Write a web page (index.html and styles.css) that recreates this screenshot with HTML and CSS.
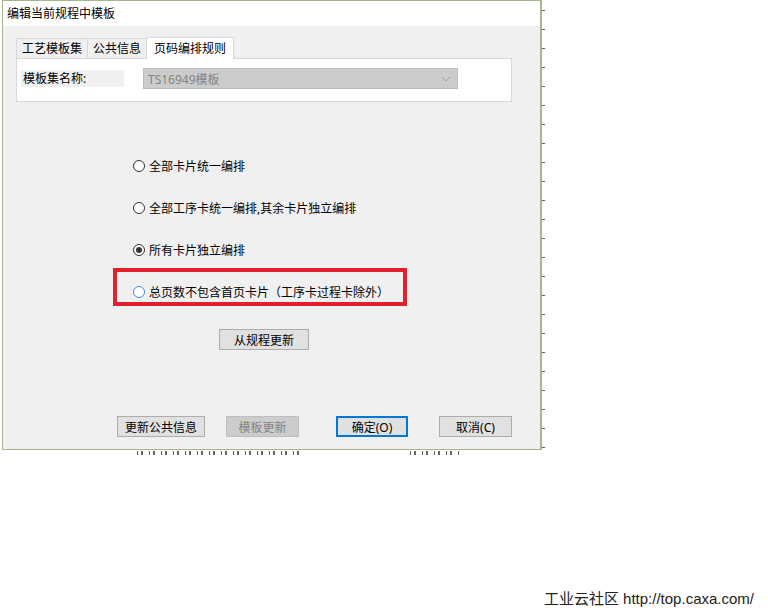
FILE: index.html
```html
<!DOCTYPE html>
<html lang="zh-CN">
<head>
  <meta charset="UTF-8" />
  <meta name="viewport" content="width=device-width, initial-scale=1.0"/>
  <title>编辑当前规程中模板</title>
  <link rel="stylesheet" href="styles.css">
</head>
<body>
  <div class="screen">
    <div class="top">
      <div class="dialog">
        <div class="title-bar">编辑当前规程中模板</div>

        <div class="content">
          <div class="tabs">
            <div class="tab">工艺模板集</div>
            <div class="tab">公共信息</div>
            <div class="tab active">页码编排规则</div>
          </div>

          <div class="panel">
            <div class="field-label">模板集名称:</div>
            <div class="combo">
              <span>TS16949模板</span>
              <svg width="10" height="6" viewBox="0 0 10 6"><path d="M1 1 L5 5 L9 1" fill="none" stroke="#a6a6a6" stroke-width="1"/></svg>
            </div>
          </div>

          <div class="options">
            <label class="opt"><span class="radio"></span>全部卡片统一编排</label>
            <label class="opt"><span class="radio"></span>全部工序卡统一编排,其余卡片独立编排</label>
            <label class="opt"><span class="radio checked"></span>所有卡片独立编排</label>
            <label class="opt marked"><span class="radio focus"></span>总页数不包含首页卡片（工序卡过程卡除外）</label>
          </div>

          <button class="btn btn-refresh">从规程更新</button>

          <div class="actions">
            <button class="btn btn-common">更新公共信息</button>
            <button class="btn btn-template" disabled>模板更新</button>
            <button class="btn btn-ok">确定(O)</button>
            <button class="btn btn-cancel">取消(C)</button>
          </div>
        </div>
      </div>
      <div class="ticks"></div>
    </div>

    <!-- bottoms of the window behind, peeking out under the dialog -->
    <div class="behind">
      <div class="marks marks-a"></div>
      <div class="marks marks-b"></div>
    </div>

    <div class="footer">工业云社区 http://top.caxa.com/</div>
  </div>
</body>
</html>
```

FILE: styles.css
```css
*, *::before, *::after {
  box-sizing: border-box;
}

body {
  margin: 0;
  background: #fff;
  color: #000;
  font-family: "Noto Sans", "Noto Sans CJK SC", sans-serif;
  font-size: 12px;
}

.screen {
  width: 768px;
  height: 614px;
  display: flex;
  flex-direction: column;
}

.top {
  display: flex;
}

/* dialog window */
.dialog {
  width: 540px;
  margin-left: 2px;
  border: 1px solid #a3b78a;
  border-right-width: 2px;
  background: #f0f0f0;
}

.title-bar {
  height: 25px;
  line-height: 25px;
  padding-left: 4px;
  background: #fff;
}

.content {
  padding: 11px 28px 12px 13px;
}

.tabs {
  display: flex;
  align-items: flex-end;
  height: 21px;
}

.tab {
  height: 20px;
  line-height: 19px;
  padding: 0 5px;
  border: 1px solid #d9d9d9;
  border-bottom: none;
  margin-right: -1px;
  background: #f0f0f0;
}

.tab.active {
  height: 22px;
  margin-bottom: -1px;
  padding: 0 7px;
  line-height: 21px;
  background: #fff;
  position: relative;
  z-index: 1;
}

.panel {
  height: 44px;
  border: 1px solid #d9d9d9;
  background: #fff;
  display: flex;
  align-items: flex-start;
  padding-top: 9px;
}

.field-label {
  width: 103px;
  height: 17px;
  line-height: 17px;
  margin: 2px 0 0 4px;
  padding-left: 2px;
  background: #f0f0f0;
}

.combo {
  width: 315px;
  height: 21px;
  margin-left: 19px;
  padding: 0 6px 0 4px;
  border: 1px solid #bdbdbd;
  background: #cccccc;
  color: #838383;
  display: flex;
  align-items: center;
  justify-content: space-between;
}

/* radio options */
.options {
  margin-top: 43px;
  padding-left: 97px;
}

.opt {
  position: relative;
  width: 294px;
  height: 42px;
  padding-left: 20px;
  display: flex;
  align-items: center;
  color: #000;
}

.opt.marked::before {
  content: "";
  position: absolute;
  left: 0;
  top: -3px;
  width: 294px;
  height: 38px;
  border: 4px solid #e2202b;
}

.radio {
  width: 12px;
  height: 12px;
  margin-right: 4px;
  border: 1px solid #333;
  border-radius: 50%;
  background: #fff;
  position: relative;
}

.radio.checked::after {
  content: "";
  position: absolute;
  left: 2px;
  top: 2px;
  width: 6px;
  height: 6px;
  border-radius: 50%;
  background: #333;
}

.radio.focus {
  border-color: #3b8ce0;
}

/* buttons */
.btn {
  height: 21px;
  padding: 0;
  border: 1px solid #adadad;
  background: #e1e1e1;
  font-family: inherit;
  font-size: 12px;
  color: #000;
}

.btn-refresh {
  display: block;
  width: 90px;
  margin: 16px 0 0 203px;
}

.actions {
  display: flex;
  margin-top: 66px;
}

.btn-common {
  width: 88px;
  margin-left: 101px;
}

.btn-template {
  width: 73px;
  margin-left: 21px;
  background: #cccccc;
  border-color: #bfbfbf;
  color: #838383;
}

.btn-ok {
  width: 72px;
  margin-left: 37px;
  border: 2px solid #0078d7;
}

.btn-cancel {
  width: 73px;
  margin-left: 31px;
}

/* bits of the window behind */
.ticks {
  width: 3px;
  height: 450px;
  background: repeating-linear-gradient(to bottom, transparent 0, transparent 10px, #6b5a45 10px, #6b5a45 11px, transparent 11px, transparent 19px);
}

.behind {
  display: flex;
  height: 6px;
  padding-top: 1px;
}

.marks {
  height: 4px;
  background: repeating-linear-gradient(to right, #333 0, #333 1px, transparent 1px, transparent 4px, #333 4px, #333 6px, transparent 6px, transparent 12px);
  opacity: 0.75;
}

.marks-a {
  width: 165px;
  margin-left: 137px;
}

.marks-b {
  width: 50px;
  margin-left: 108px;
}

.footer {
  margin-top: auto;
  padding: 0 14px 6px 0;
  text-align: right;
  font-family: "Liberation Sans", "Noto Sans CJK SC", sans-serif;
  font-size: 15px;
  color: #222;
}
```
